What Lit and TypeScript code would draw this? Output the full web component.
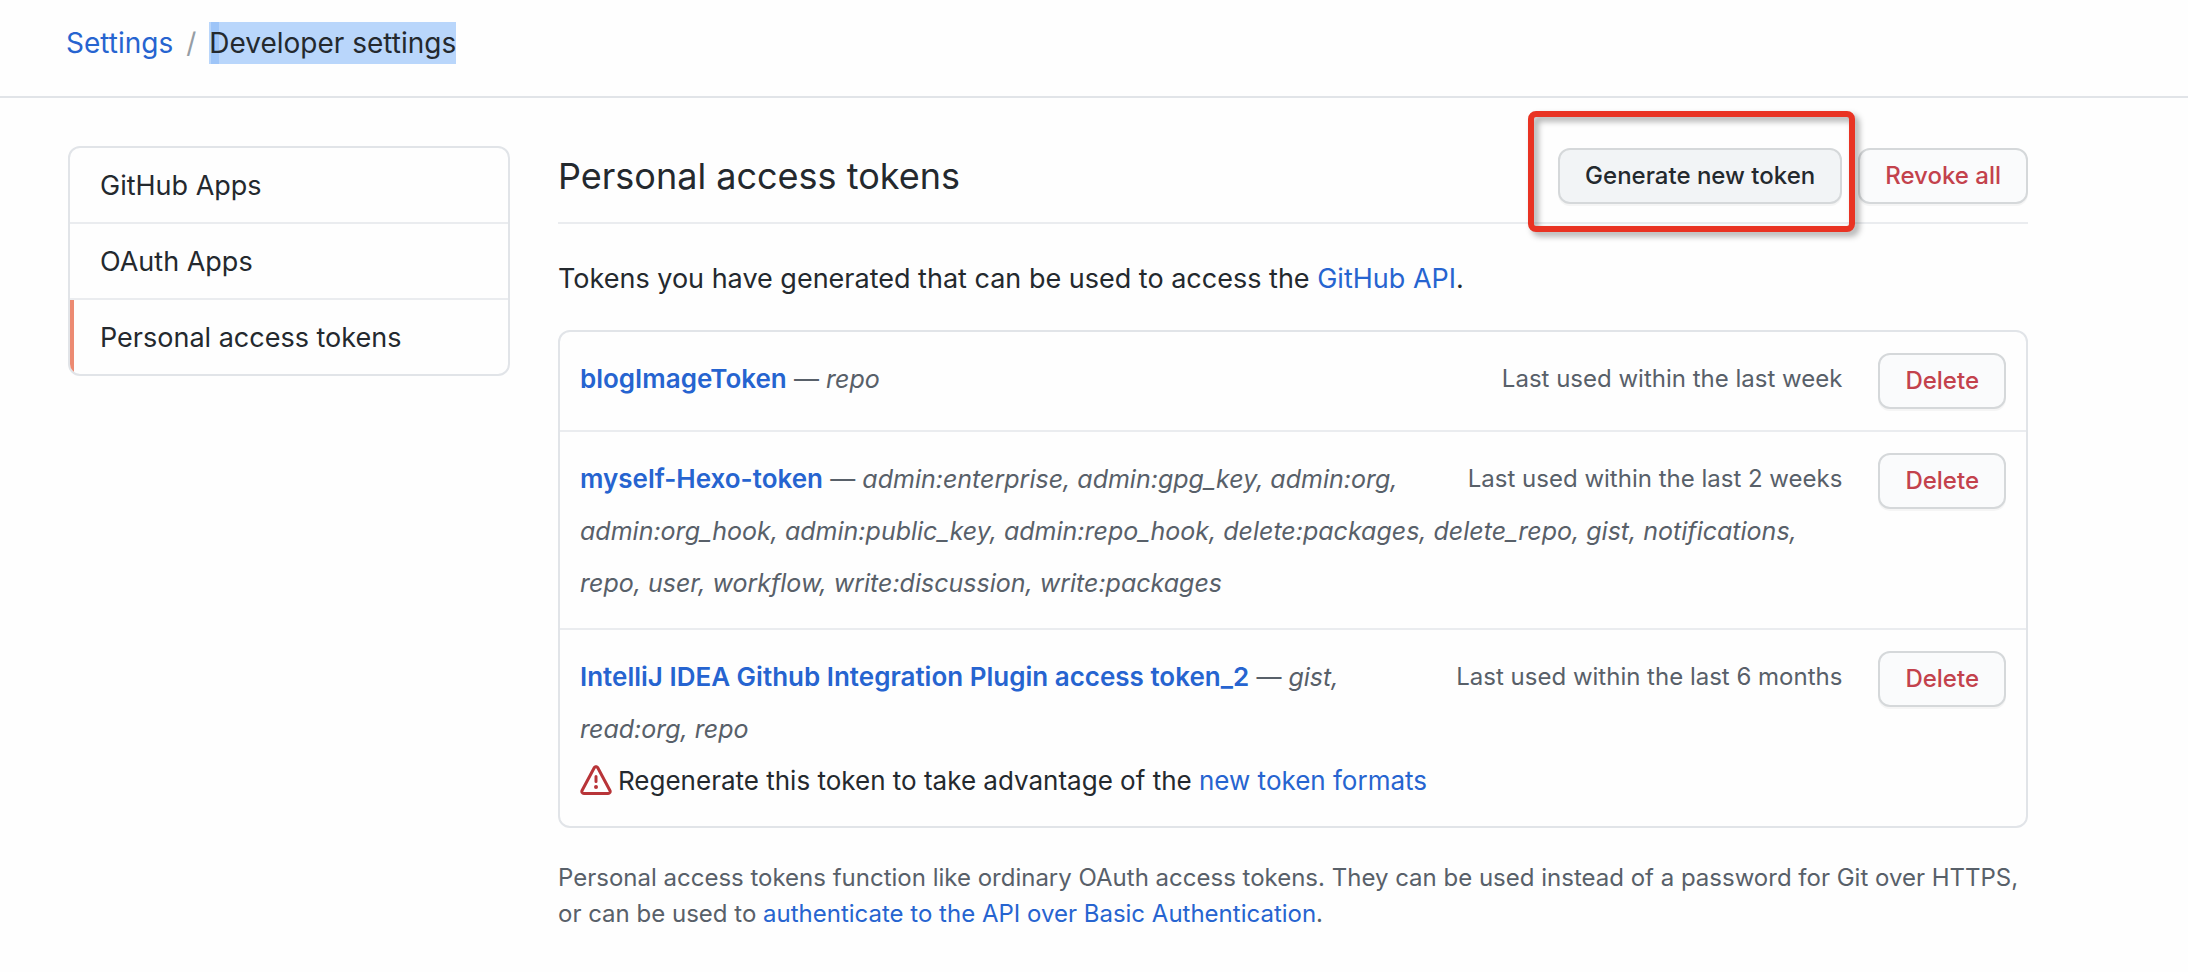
import { LitElement, html, css, svg, nothing } from "lit";
import { customElement, property } from "lit/decorators.js";

interface Token {
  name: string;
  scopes: string[];
  lastUsed: string;
  outdated?: boolean;
}

const NAV = ["GitHub Apps", "OAuth Apps", "Personal access tokens"];

const TOKENS: Token[] = [
  { name: "blogImageToken", scopes: ["repo"], lastUsed: "Last used within the last week" },
  {
    name: "myself-Hexo-token",
    scopes: [
      "admin:enterprise", "admin:gpg_key", "admin:org", "admin:org_hook",
      "admin:public_key", "admin:repo_hook", "delete:packages", "delete_repo",
      "gist", "notifications", "repo", "user", "workflow",
      "write:discussion", "write:packages",
    ],
    lastUsed: "Last used within the last 2 weeks",
  },
  {
    name: "IntelliJ IDEA Github Integration Plugin access token_2",
    scopes: ["gist", "read:org", "repo"],
    lastUsed: "Last used within the last 6 months",
    outdated: true,
  },
];

const shared = css`
  * { box-sizing: border-box; }
  a { color: #2664d0; text-decoration: none; }
  a:hover { text-decoration: underline; }
  .btn {
    height: 56px;
    padding: 0 25px;
    border: 2px solid #d5d8da;
    border-radius: 12px;
    background: #fafbfc;
    box-shadow: 0 2px 0 rgba(27, 31, 35, 0.04);
    color: #24292e;
    font-family: inherit;
    font-size: 24px;
    font-weight: 500;
    line-height: 36px;
    white-space: nowrap;
    cursor: pointer;
  }
  .btn.active { background: #f2f4f6; }
  .btn.danger { color: #c3424c; }
`;

@customElement("token-row")
export class TokenRow extends LitElement {
  @property({ attribute: false }) token!: Token;

  static styles = [
    shared,
    css`
      :host { display: flex; gap: 36px; padding: 21px 20px 19px; }
      .info { flex: 1; min-width: 0; font-size: 26px; line-height: 52px; }
      .used { float: right; margin-left: 40px; font-size: 24px; color: #586069; }
      .name { font-weight: 600; }
      .scopes { font-size: 25px; color: #586069; }
      .notice { display: flex; align-items: center; gap: 6px; }
      .alert { width: 32px; height: 32px; fill: #b83438; }
      .action { padding-bottom: 2px; }
    `,
  ];

  render() {
    const { name, scopes, lastUsed, outdated } = this.token;
    return html`
      <div class="info">
        <span class="used">${lastUsed}</span>
        <a class="name" href="#">${name}</a>
        <span class="scopes">— <em>${scopes.join(", ")}</em></span>
        ${outdated
          ? html`<div class="notice">
              <svg class="alert" viewBox="0 0 16 16" aria-hidden="true">
                ${svg`<path fill-rule="evenodd" d="M8.22 1.754a.25.25 0 00-.44 0L1.698 13.132a.25.25 0 00.22.368h12.164a.25.25 0 00.22-.368L8.22 1.754zm-1.763-.707c.659-1.234 2.427-1.234 3.086 0l6.082 11.378A1.75 1.75 0 0114.082 15H1.918a1.75 1.75 0 01-1.543-2.575L6.457 1.047zM9 11a1 1 0 11-2 0 1 1 0 012 0zm-.25-5.25a.75.75 0 00-1.5 0v2.5a.75.75 0 001.5 0v-2.5z"></path>`}
              </svg>
              <span>Regenerate this token to take advantage of the <a href="#">new token formats</a></span>
            </div>`
          : nothing}
      </div>
      <div class="action"><button class="btn danger" type="button">Delete</button></div>
    `;
  }
}

@customElement("app-root")
export class AppRoot extends LitElement {
  static styles = [
    shared,
    css`
      :host {
        display: block;
        min-height: 100vh;
        background: #fefefe;
        color: #24292e;
        font-family: Inter, "Liberation Sans", sans-serif;
        font-size: 27px;
        line-height: 42px;
      }
      .topbar {
        display: flex;
        gap: 13px;
        padding: 22px 66px 32px;
        border-bottom: 2px solid #e1e4e8;
        font-size: 28px;
      }
      .slash { color: #959da5; }
      .selected {
        background: linear-gradient(90deg, #b9d6fb 2px, #9ec5f8 2px 10px, #b9d6fb 10px);
      }
      .layout {
        display: grid;
        grid-template-columns: 442px minmax(0, 1fr);
        gap: 48px;
        align-items: start;
        max-width: 2096px;
        padding: 48px 68px;
      }
      .menu {
        border: 2px solid #e1e4e8;
        border-radius: 12px;
        overflow: hidden;
      }
      .item {
        display: block;
        padding: 17px 30px 15px;
        color: inherit;
      }
      .item + .item { border-top: 2px solid #eaecef; }
      .item.current { box-shadow: inset 4px 0 0 #ec8a72; }
      .head {
        display: flex;
        align-items: center;
        justify-content: space-between;
        padding: 2px 0 18px;
        border-bottom: 2px solid #eaecef;
      }
      h1 { margin: 0; font-size: 36px; font-weight: 400; line-height: 56px; }
      .actions { display: flex; gap: 16px; }
      .marked { position: relative; }
      .marker {
        position: absolute;
        inset: -37px -13px -28px -30px;
        border: 6px solid #e93323;
        border-radius: 8px;
        filter: drop-shadow(4px 4px 3px rgba(0, 0, 0, 0.35));
        pointer-events: none;
      }
      .intro { margin: 34px 0 30px; }
      .tokens {
        margin: 0;
        padding: 0;
        list-style: none;
        border: 2px solid #e1e4e8;
        border-radius: 12px;
      }
      .tokens li + li { border-top: 2px solid #eaecef; }
      .note { margin: 32px 0 0; font-size: 24px; line-height: 36px; color: #586069; }
    `,
  ];

  render() {
    return html`
      <nav class="topbar" aria-label="Breadcrumb">
        <a href="#">Settings</a><span class="slash">/</span><span class="selected">Developer settings</span>
      </nav>
      <div class="layout">
        <nav class="menu" aria-label="Developer settings">
          ${NAV.map((label, i) => html`<a class="item ${i === 2 ? "current" : ""}" href="#">${label}</a>`)}
        </nav>
        <main>
          <div class="head">
            <h1>Personal access tokens</h1>
            <div class="actions">
              <div class="marked">
                <button class="btn active" type="button">Generate new token</button>
                <div class="marker"></div>
              </div>
              <button class="btn danger" type="button">Revoke all</button>
            </div>
          </div>
          <p class="intro">Tokens you have generated that can be used to access the <a href="#">GitHub API</a>.</p>
          <ul class="tokens">
            ${TOKENS.map((t) => html`<li><token-row .token=${t}></token-row></li>`)}
          </ul>
          <p class="note">
            Personal access tokens function like ordinary OAuth access tokens. They can be used instead of a
            password for Git over HTTPS, or can be used to
            <a href="#">authenticate to the API over Basic Authentication</a>.
          </p>
        </main>
      </div>
    `;
  }
}
